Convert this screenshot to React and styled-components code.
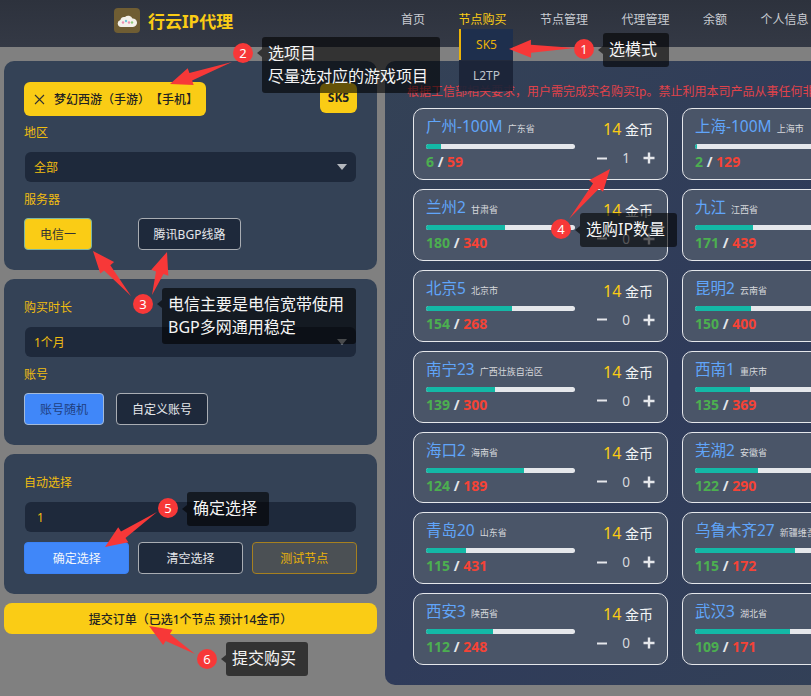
import React from 'react';
import styled, { createGlobalStyle } from 'styled-components';

const Global = createGlobalStyle`
  html, body { margin: 0; padding: 0; height: 100%; background: #808080; overflow: hidden; }
  body { font-family: "Noto Sans", "Noto Sans CJK SC", sans-serif; text-spacing-trim: space-all; }
  #root { width: 811px; height: 696px; overflow: hidden; position: relative; }
  * { box-sizing: border-box; }
`;

const Page = styled.div`width: 811px; height: 696px; position: relative; overflow: hidden; background: #808080;`;

const Header = styled.header`
  height: 47px; display: flex; align-items: flex-start;
  background: linear-gradient(180deg, #2d323d 0%, #343945 100%);
  padding-left: 114px; position: relative; z-index: 2;
`;
const Brand = styled.div`display: flex; align-items: center; gap: 8px; width: 287px; height: 41px;`;
const LogoBox = styled.div`width: 26px; height: 25px; border-radius: 4px; background: #6f5d33; display: flex; align-items: center; justify-content: center;`;
const BrandName = styled.span`font-size: 17px; font-weight: 700; color: #facc15;`;
const Nav = styled.nav`display: flex; gap: 33.5px; white-space: nowrap;`;
const NavItem = styled.div`
  position: relative; font-size: 12px; line-height: 17px; padding-top: 11px;
  color: ${p => (p.$active ? '#facc15' : '#c9ccd2')};
`;
const Dropdown = styled.div`position: absolute; left: 0; top: 29px; width: 54px; background: rgba(26, 35, 54, 0.92);`;
const DropItem = styled.div`
  height: 31px; display: flex; align-items: center; justify-content: center; font-size: 12px;
  color: ${p => (p.$active ? '#eab308' : '#bfc4cc')};
  background: ${p => (p.$active ? '#1e2f4d' : 'transparent')};
  border-left: 2px solid ${p => (p.$active ? '#eab308' : 'transparent')};
`;

const Main = styled.main`display: flex; gap: 8px; padding: 14px 0 0 4px; width: 1100px;`;
const Side = styled.aside`width: 373px; display: flex; flex-direction: column; gap: 9px; flex: none;`;
const Panel = styled.section`background: #344256; border-radius: 10px; padding: 20px 20px 20px;`;
const ChipRow = styled.div`display: flex; justify-content: space-between; align-items: flex-start; padding-top: 1px;`;
const Chip = styled.div`
  height: 34px; width: 182px; background: #facc15; border-radius: 6px; display: flex; align-items: center;
  gap: 9px; padding-left: 10px; font-size: 12px; font-weight: 500; color: #222; white-space: nowrap;
`;
const Mode = styled.div`
  width: 37px; height: 30px; margin-top: 1px; background: #facc15; border-radius: 6px; font-size: 12px; font-weight: 700;
  color: #222; display: flex; align-items: center; justify-content: center; padding-bottom: 2px;
`;
const Label = styled.div`font-size: 12px; line-height: 17px; color: #f0bd10; margin-top: ${p => p.$mt ?? 9}px;`;
const Select = styled.div`
  height: 30px; margin: 11px 1px 0; background: #1e293b; border-radius: 6px; display: flex; align-items: center;
  justify-content: space-between; padding: 0 9px 0 9px; font-size: 12px; color: #f0bd10;
`;
const Caret = styled.i`width: 0; height: 0; border-left: 5px solid transparent; border-right: 5px solid transparent; border-top: 6px solid #b4b8be;`;
const BtnRow = styled.div`display: flex; margin-top: 10px; gap: ${p => p.$gap}px;`;
const variants = {
  yellow: 'background:#facc15;color:#333;border-color:#7db6a2;',
  dark: 'background:#1e293b;color:#e5e7eb;border-color:#a9adb3;',
  blue: 'background:#4087f9;color:#1f3f7f;border-color:#a4bad8;',
  primary: 'background:#4087f9;color:#f3f6fb;border-color:#3b82f6;',
  test: 'background:#4b5054;color:#eab308;border-color:#a6801f;',
};
const Btn = styled.div`
  height: 32px; border: 1px solid; border-radius: 4px; font-size: 12px; display: flex; align-items: center; justify-content: center;
  ${p => (p.$w ? `width:${p.$w}px;flex:none;` : 'flex:1;')}
  ${p => variants[p.$v]}
`;
const Submit = styled.div`
  height: 31px; background: #facc15; border-radius: 8px; display: flex; align-items: center; justify-content: center;
  font-size: 12px; font-weight: 500; color: #222; white-space: pre;
`;

const Board = styled.section`
  width: 600px; height: 624px; flex: none; border-radius: 10px; padding: 22px 0 0 22px;
  background: linear-gradient(135deg, #344256 0%, #2f3b5a 50%, #344256 100%);
`;
const Notice = styled.div`font-size: 12px; line-height: 17px; color: #e0424a; white-space: nowrap;`;
const Grid = styled.div`display: grid; grid-template-columns: 255px 255px; grid-auto-rows: 71.9px; column-gap: 14px; row-gap: 9px; margin: 8px 0 0 6px;`;
const Card = styled.article`
  background: #4a5568; border: 1px solid #e5e7eb; border-radius: 10px; padding: 5px 13px 0 12px;
  display: grid; grid-template-columns: 149px 1fr; grid-template-rows: 25px 1fr;
`;
const TitleLine = styled.div`display: flex; align-items: baseline; gap: 5px; white-space: nowrap; min-width: 0;`;
const City = styled.span`font-size: 15.5px; font-weight: 400; color: #60a5fa;`;
const Province = styled.span`font-size: 9px; color: #d6d8dc;`;
const Price = styled.div`text-align: right; font-size: 14px; line-height: 20px; color: #f3f4f6; padding: 5px 1px 0 0; white-space: nowrap;`;
const Coin = styled.b`font-weight: 400; color: #facc15; font-size: 16px;`;
const Stat = styled.div`padding-top: 5px;`;
const Track = styled.div`height: 5px; background: #e5e7eb; border-radius: 3px; overflow: hidden;`;
const Fill = styled.div`height: 100%; background: #14b8a6;`;
const Count = styled.div`font-size: 14px; font-weight: 700; line-height: 18px; margin-top: 4px; color: #e5e7eb;`;
const Used = styled.span`color: #4caf50;`;
const Total = styled.span`color: #f44336;`;
const Stepper = styled.div`display: flex; align-items: center; justify-content: space-between; padding: 10px 0 0 22px; height: 28px; margin-right: -1px; color: #d8dadf;`;
const StepCount = styled.span`font-size: 13.5px; width: 20px; text-align: center; padding-left: 2px;`;

const Overlay = styled.div`position: absolute; inset: 0; z-index: 5; pointer-events: none;`;
const ArrowLayer = styled.svg`position: absolute; inset: 0; width: 811px; height: 696px;`;
const Badge = styled.div`
  position: absolute; width: 20px; height: 20px; border-radius: 50%; background: #f73838; color: #fff; font-size: 13px;
  display: flex; align-items: center; justify-content: center;
  left: ${p => p.$x - 10}px; top: ${p => p.$y - 10}px;
`;
const Tip = styled.div`
  position: absolute; left: ${p => p.$x}px; top: ${p => p.$y}px; width: ${p => p.$w}px; height: ${p => p.$h}px;
  background: rgba(0, 0, 0, 0.6); border-radius: 3px; color: #f5f5f5; font-size: 16px; line-height: 23px; padding: 5px 6px; white-space: pre;
  overflow: hidden;
`;
const Notch = styled.i`
  position: absolute; left: ${p => p.$x - 5}px; top: ${p => p.$y - 4}px; width: 0; height: 0;
  border-top: 4px solid transparent; border-bottom: 4px solid transparent; border-right: 5px solid rgba(0, 0, 0, 0.6);
`;

const cards = [
  ['广州-100M', '广东省', 6, 59, 1], ['上海-100M', '上海市', 2, 129, 0],
  ['兰州2', '甘肃省', 180, 340, 0], ['九江', '江西省', 171, 439, 0],
  ['北京5', '北京市', 154, 268, 0], ['昆明2', '云南省', 150, 400, 0],
  ['南宁23', '广西壮族自治区', 139, 300, 0], ['西南1', '重庆市', 135, 369, 0],
  ['海口2', '海南省', 124, 189, 0], ['芜湖2', '安徽省', 122, 290, 0],
  ['青岛20', '山东省', 115, 431, 0], ['乌鲁木齐27', '新疆维吾尔自治区', 115, 172, 0],
  ['西安3', '陕西省', 112, 248, 0], ['武汉3', '湖北省', 109, 171, 0],
];

const arrowPoints = ([x0, y0], [x1, y1], head = 22, wing = 9, neck = 4) => {
  const dx = x1 - x0, dy = y1 - y0, len = Math.hypot(dx, dy);
  const ux = dx / len, uy = dy / len, nx = -uy, ny = ux;
  const bx = x1 - ux * head, by = y1 - uy * head;
  return [
    [x0, y0], [bx + nx * neck, by + ny * neck], [bx + nx * wing, by + ny * wing], [x1, y1],
    [bx - nx * wing, by - ny * wing], [bx - nx * neck, by - ny * neck],
  ].map(p => p.map(v => v.toFixed(1)).join(',')).join(' ');
};

const arrows = [
  [[575, 48], [509, 49]], [[232, 62], [170, 84]], [[131, 296], [93, 251]], [[152, 295], [167, 252]],
  [[569, 219], [610, 169]], [[157, 512], [105, 547]], [[195, 654], [149, 626]],
];
const badges = [[1, 584, 49], [2, 243, 53], [3, 143, 304], [4, 561, 229], [5, 168, 508], [6, 207, 659]];
const tips = [
  ['选模式', 603, 33, 66, 34], ['选项目\n尽量选对应的游戏项目', 262, 37, 178, 56],
  ['电信主要是电信宽带使用\nBGP多网通用稳定', 162, 288, 194, 56], ['选购IP数量', 580, 213, 97, 34],
  ['确定选择', 187, 492, 82, 34], ['提交购买', 226, 642, 82, 34],
];

const Logo = () => (
  <svg width="20" height="14" viewBox="0 0 20 14">
    <path d="M4 13a3.500 3.500 0 0 1-.6-6.900A4 4 0 0 1 8 3a4.600 4.600 0 0 1 7.500 1.500A4.200 4.200 0 0 1 16 13z" fill="#f4f1ea" />
    <circle cx="6" cy="8.500" r="1.200" fill="#ee8fb0" /><circle cx="9" cy="7" r="1.200" fill="#6cc5d6" />
    <circle cx="12" cy="8.500" r="1.200" fill="#ee8fb0" /><circle cx="15" cy="8.500" r="1.200" fill="#8ecb7a" />
  </svg>
);
const Cross = () => (
  <svg width="11" height="11" viewBox="0 0 11 11" stroke="#333" strokeWidth="1.1"><path d="M1 1l9 9M10 1l-9 9" /></svg>
);
const Minus = () => (
  <svg width="10" height="11" viewBox="0 0 10 11" stroke="#e5e7eb" strokeWidth="2"><path d="M0 5.500h10" /></svg>
);
const Plus = () => (
  <svg width="12" height="12" viewBox="0 0 12 12" stroke="#e5e7eb" strokeWidth="2.400"><path d="M0.500 6h11M6 0.500v11" /></svg>
);

export default function App() {
  return (
    <Page>
      <Global />
      <Header>
        <Brand><LogoBox><Logo /></LogoBox><BrandName>行云IP代理</BrandName></Brand>
        <Nav>
          <NavItem>首页</NavItem>
          <NavItem $active>节点购买
            <Dropdown><DropItem $active>SK5</DropItem><DropItem>L2TP</DropItem></Dropdown>
          </NavItem>
          <NavItem>节点管理</NavItem>
          <NavItem>代理管理</NavItem>
          <NavItem>余额</NavItem>
          <NavItem>个人信息</NavItem>
        </Nav>
      </Header>
      <Main>
        <Side>
          <Panel>
            <ChipRow>
              <Chip><Cross />梦幻西游（手游）【手机】</Chip>
              <Mode>SK5</Mode>
            </ChipRow>
            <Label $mt={8}>地区</Label>
            <Select>全部<Caret /></Select>
            <Label>服务器</Label>
            <BtnRow $gap={46}><Btn $w={68} $v="yellow">电信一</Btn><Btn $w={103} $v="dark">腾讯BGP线路</Btn></BtnRow>
          </Panel>
          <Panel>
            <Label $mt={0}>购买时长</Label>
            <Select>1个月<Caret /></Select>
            <Label>账号</Label>
            <BtnRow $gap={12}><Btn $w={80} $v="blue">账号随机</Btn><Btn $w={92} $v="dark">自定义账号</Btn></BtnRow>
          </Panel>
          <Panel>
            <Label $mt={0}>自动选择</Label>
            <Select>&nbsp;1</Select>
            <BtnRow $gap={8.5}><Btn $v="primary">确定选择</Btn><Btn $v="dark">清空选择</Btn><Btn $v="test">测试节点</Btn></BtnRow>
          </Panel>
          <Submit>提交订单（已选1个节点 预计14金币）</Submit>
        </Side>
        <Board>
          <Notice>根据工信部相关要求，用户需完成实名购买Ip。禁止利用本司产品从事任何非法活动</Notice>
          <Grid>
            {cards.map(([city, prov, used, total, n]) => (
              <Card key={city}>
                <TitleLine><City>{city}</City><Province>{prov}</Province></TitleLine>
                <Price><Coin>14</Coin> 金币</Price>
                <Stat>
                  <Track><Fill style={{ width: `${(used / total) * 100}%` }} /></Track>
                  <Count><Used>{used}</Used> / <Total>{total}</Total></Count>
                </Stat>
                <Stepper><Minus /><StepCount>{n}</StepCount><Plus /></Stepper>
              </Card>
            ))}
          </Grid>
        </Board>
      </Main>
      <Overlay>
        <ArrowLayer viewBox="0 0 811 696">
          {arrows.map(([a, b], i) => <polygon key={i} points={arrowPoints(a, b)} fill="#f73838" />)}
        </ArrowLayer>
        {tips.map(([t, x, y, w, h]) => (
          <React.Fragment key={t}>
            <Notch $x={x} $y={y + (h > 40 ? 16 : h / 2)} />
            <Tip $x={x} $y={y} $w={w} $h={h}>{t}</Tip>
          </React.Fragment>
        ))}
        {badges.map(([n, x, y]) => <Badge key={n} $x={x} $y={y}>{n}</Badge>)}
      </Overlay>
    </Page>
  );
}
